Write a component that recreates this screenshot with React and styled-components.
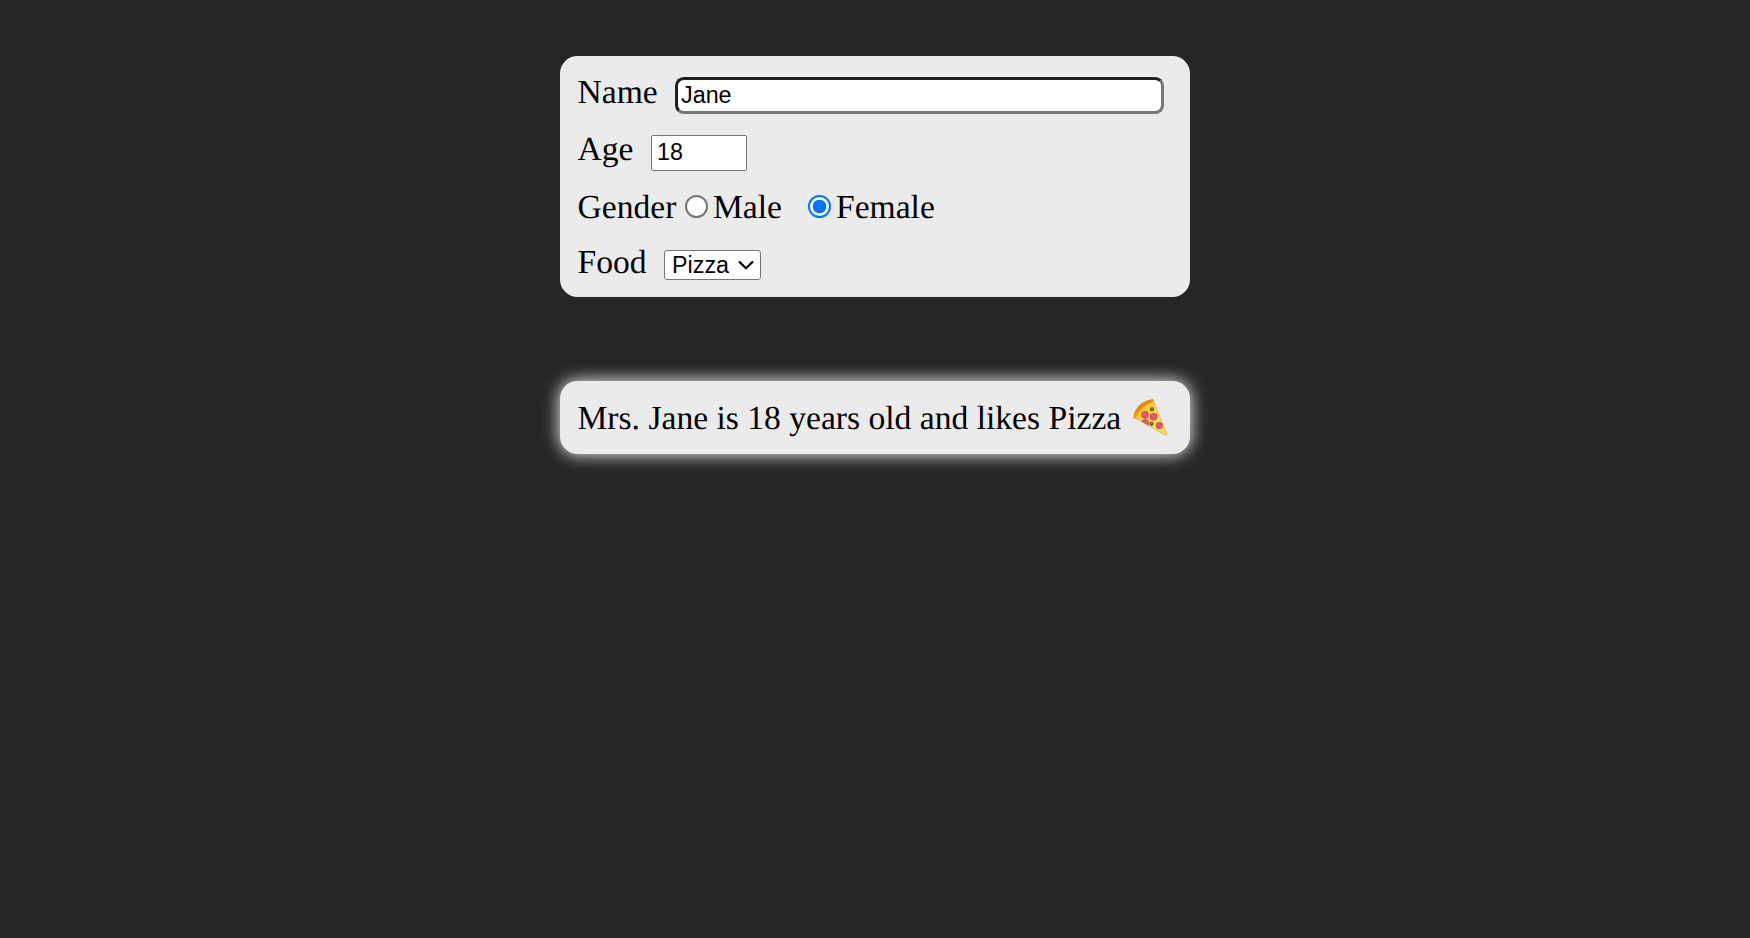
import React, { useState } from "react";
import styled, { createGlobalStyle } from "styled-components";

const GlobalStyle = createGlobalStyle`
  * { box-sizing: border-box; }
  body {
    margin: 0;
    min-height: 100vh;
    background: #262626;
    color: #000;
    font-family: "Liberation Serif", "Times New Roman", serif;
    font-size: 33.6px;
    line-height: 40px;
    text-rendering: geometricPrecision;
  }
`;

const Page = styled.main`
  display: flex;
  flex-direction: column;
  align-items: center;
  gap: 84px;
  padding-top: 56px;
`;

const Card = styled.section`
  width: 630px;
  padding: 17px 17.5px;
  border-radius: 17.5px;
  background: #ebebeb;
`;

const FormCard = styled(Card)`
  height: 241px;
`;

const ResultCard = styled(Card)`
  display: flex;
  align-items: flex-start;
  height: 73px;
  white-space: nowrap;
  box-shadow: 0 0 17.5px #fafffa;
`;

const Message = styled.span`
  padding-top: 1px;
`;

const Row = styled.div`
  display: flex;
  align-items: flex-start;
  height: ${(p) => p.$height}px;
`;

const Label = styled.label`
  flex: 0 0 ${(p) => p.$width}px;
`;

const TextInput = styled.input`
  width: 489px;
  height: 37px;
  margin: 4px 0 0;
  padding: 0 3px;
  border: 3px inset #767676;
  border-radius: 8.75px;
  outline: none;
  background: #fff;
  color: #000;
  font: 23.333px "Liberation Sans", Arial, sans-serif;
`;

const NumberInput = styled.input`
  width: 96px;
  height: 36px;
  margin: 5px 0 0;
  padding: 0 4px 2px;
  color: #000;
  font: 23.333px "Liberation Sans", Arial, sans-serif;
`;

const Option = styled.label`
  display: flex;
  align-items: flex-start;
  width: 123px;
`;

const Radio = styled.input`
  flex: none;
  appearance: none;
  width: 23px;
  height: 23px;
  margin: 7px 5px 0 0;
  border: 2px solid #767676;
  border-radius: 50%;
  background: #fff;

  &:checked {
    border-color: #0075ff;
    background: radial-gradient(circle, #0075ff 6.4px, #fff 7.2px);
  }
`;

const SelectWrap = styled.div`
  display: grid;
  width: 97px;
  height: 30px;
  margin-top: 7px;
`;

const Select = styled.select`
  grid-area: 1 / 1;
  appearance: none;
  margin: 0;
  padding: 0 0 0 7px;
  border: 1px solid #767676;
  border-radius: 3px;
  background: #fff;
  color: #000;
  font: 23.333px "Liberation Sans", Arial, sans-serif;
`;

const Chevron = styled.svg`
  grid-area: 1 / 1;
  place-self: center end;
  width: 16px;
  height: 10px;
  margin-right: 7px;
  pointer-events: none;
`;

const FoodIcon = styled.svg`
  flex: none;
  width: 37px;
  height: 39px;
  margin-left: 11px;
`;

function PizzaSlice() {
  return (
    <FoodIcon viewBox="0 0 37 39" role="img" aria-label="Pizza slice">
      <defs>
        <linearGradient id="cheese" x1="0" y1="0" x2="1" y2="1">
          <stop offset="0.2" stopColor="#fbc02d" />
          <stop offset="0.65" stopColor="#fddf63" />
          <stop offset="1" stopColor="#fbd84b" />
        </linearGradient>
        <linearGradient id="crust" x1="0" y1="0" x2="0.5" y2="0.7">
          <stop offset="0.3" stopColor="#d07a08" />
          <stop offset="1" stopColor="#f2a01c" />
        </linearGradient>
        <clipPath id="slice">
          <path d="M2 19.5 Q8 7 21 2 L35 36.8 Q34.5 37.6 33.5 37 Z" />
        </clipPath>
      </defs>
      <path d="M2.5 19.5 Q8 7 21 2 L35 36.8 Q34.8 37.8 33.5 37.2 Z" fill="url(#cheese)" stroke="#d99a25" strokeWidth="0.6" />
      <g clipPath="url(#slice)">
        <g fill="#dc5266" stroke="#c84358" strokeWidth="0.5">
          <circle cx="13" cy="16.8" r="3.6" />
          <circle cx="21.6" cy="18.8" r="3.6" />
          <circle cx="13.2" cy="25" r="3.6" />
          <circle cx="27.3" cy="27.6" r="3.3" />
        </g>
        <g fill="#e8808a">
          <circle cx="12" cy="15.6" r="0.7" />
          <circle cx="14.4" cy="17.9" r="0.7" />
          <circle cx="20.5" cy="17.8" r="0.7" />
          <circle cx="22.8" cy="20" r="0.7" />
          <circle cx="14" cy="24" r="0.7" />
          <circle cx="26.5" cy="26.7" r="0.7" />
          <circle cx="28.4" cy="28.8" r="0.7" />
        </g>
      </g>
      <g fill="#d6b84c" stroke="#514c27" strokeWidth="1.3">
        <circle cx="20" cy="11.2" r="1.4" />
        <circle cx="19.6" cy="25.8" r="1.4" />
      </g>
      <path d="M1.2 19.7 C2 10 11 2 20.8 1 Q22 1.3 21.7 4 C14 6 7 11.5 4.2 20.2 Q2 21.2 1.2 19.7 Z" fill="url(#crust)" />
    </FoodIcon>
  );
}

const foods = { Pizza: <PizzaSlice />, Burger: " 🍔", Pasta: " 🍝" };

export default function App() {
  const [name, setName] = useState("Jane");
  const [age, setAge] = useState("18");
  const [gender, setGender] = useState("Female");
  const [food, setFood] = useState("Pizza");

  return (
    <>
      <GlobalStyle />
      <Page>
        <FormCard>
          <Row $height={57}>
            <Label $width={97.5} htmlFor="name">Name</Label>
            <TextInput id="name" value={name} onChange={(e) => setName(e.target.value)} />
          </Row>
          <Row $height={58}>
            <Label $width={73.5} htmlFor="age">Age</Label>
            <NumberInput id="age" type="number" value={age} onChange={(e) => setAge(e.target.value)} />
          </Row>
          <Row $height={55}>
            <Label as="span" $width={107.5}>Gender</Label>
            {["Male", "Female"].map((value) => (
              <Option key={value}>
                <Radio
                  type="radio"
                  name="gender"
                  checked={gender === value}
                  onChange={() => setGender(value)}
                />
                {value}
              </Option>
            ))}
          </Row>
          <Row $height={37}>
            <Label $width={86.5} htmlFor="food">Food</Label>
            <SelectWrap>
              <Select id="food" value={food} onChange={(e) => setFood(e.target.value)}>
                {Object.keys(foods).map((item) => (
                  <option key={item}>{item}</option>
                ))}
              </Select>
              <Chevron viewBox="0 0 16 10" fill="none" stroke="#000" strokeWidth="2.2">
                <path d="M1 1.5 L8 8.3 L15 1.5" />
              </Chevron>
            </SelectWrap>
          </Row>
        </FormCard>
        <ResultCard>
          <Message>{gender === "Female" ? "Mrs." : "Mr."} {name} is {age} years old and likes {food}</Message>
          {foods[food]}
        </ResultCard>
      </Page>
    </>
  );
}
